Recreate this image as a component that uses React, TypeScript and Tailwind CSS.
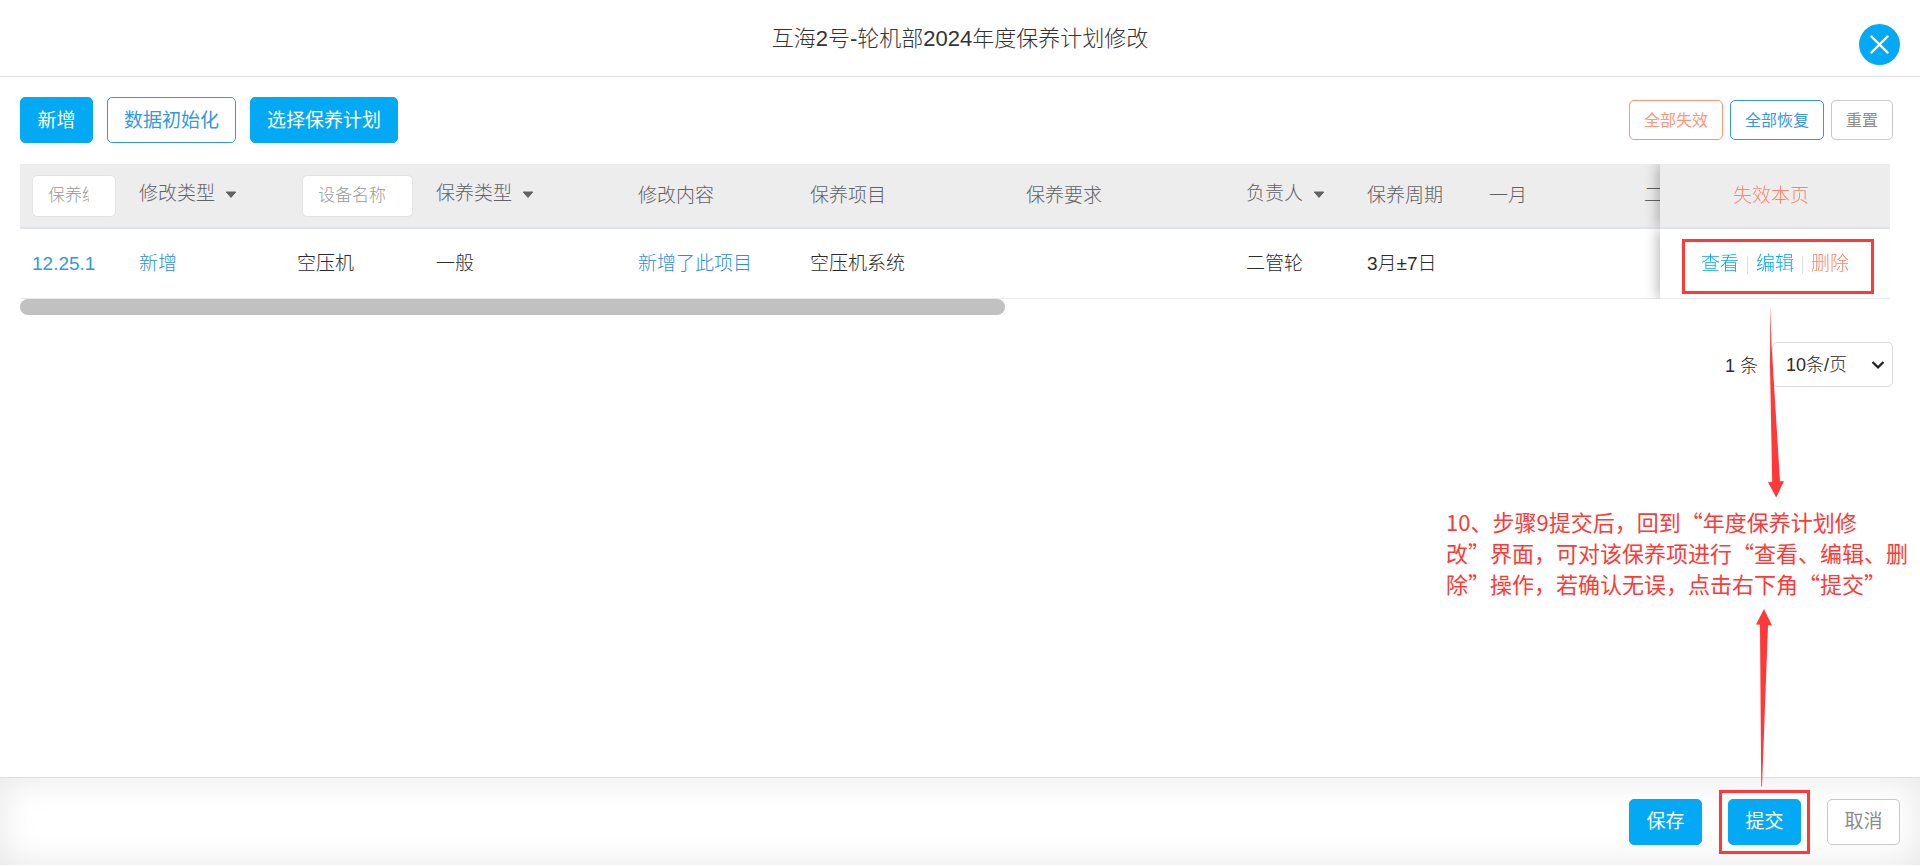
import type { ReactNode } from "react";

const solid =
  "h-[46px] min-w-[73px] rounded-[5px] border border-[#03a9f4] bg-[#03a9f4] px-4 pt-[2px] text-[19px] font-normal text-white";
const outlineBlue =
  "h-[46px] rounded-[5px] border border-[#3498e0] bg-white px-4 pt-[2px] text-[19px] font-normal text-[#3498e0]";
const outlineGray =
  "h-[46px] min-w-[73px] rounded-[5px] border border-[#c8c9cc] bg-white px-4 pt-[2px] text-[19px] font-normal text-[#8c8c8c]";
const small = "h-10 rounded-[5px] border bg-white px-[14px] pt-[2px] text-base font-normal";
const pinned =
  "sticky right-0 shadow-[-3px_0_12px_rgba(0,0,0,0.25)] [clip-path:inset(0_0_0_-16px)]";

function Caret() {
  return (
    <svg width="12" height="8" viewBox="0 0 12 8" className="shrink-0" aria-hidden="true">
      <path
        d="M1.2 1h9.6L6 6.4z"
        fill="#606266"
        stroke="#606266"
        strokeWidth="1"
        strokeLinejoin="round"
      />
    </svg>
  );
}

function HeadCell({ children }: { children?: ReactNode }) {
  return (
    <th
      scope="col"
      className="h-[65px] border-b-2 border-[#dfe4ea] bg-[#ededed] px-3 pt-[2px] text-left font-light whitespace-nowrap text-[#606266]"
    >
      {children}
    </th>
  );
}

function FilterHead({ label }: { label: string }) {
  return (
    <HeadCell>
      <button type="button" className="flex items-center gap-[10px] pb-1">
        {label}
        <Caret />
      </button>
    </HeadCell>
  );
}

function FilterInput({ label, className }: { label: string; className: string }) {
  return (
    <input
      type="text"
      aria-label={label}
      placeholder={label}
      className={
        "mb-[2px] block h-[42px] rounded-[5px] border border-[#e4e4e4] bg-white pr-[26px] pl-[15px] text-[17px] placeholder:text-[#999999] " +
        className
      }
    />
  );
}

function Cell({ children }: { children?: ReactNode }) {
  return (
    <td className="h-[70px] border-b border-[#e6e8eb] px-3 pt-[2px] whitespace-nowrap">
      {children}
    </td>
  );
}

function Separator() {
  return <span className="h-[18px] w-px bg-[#dcdfe6]" />;
}

export default function App() {
  return (
    <div className="relative flex h-screen flex-col overflow-hidden bg-white pb-[2px] font-['Liberation_Sans','Noto_Sans_CJK_SC',sans-serif] text-[19px] font-light text-[#2b2b2b]">
      <header className="grid h-[77px] shrink-0 grid-cols-[1fr_auto_1fr] items-center border-b border-[#e2e2e2] px-5">
        <h1 className="col-start-2 text-[22px] font-light text-[#333333]">
          互海2号-轮机部2024年度保养计划修改
        </h1>
        <button
          type="button"
          aria-label="关闭"
          className="mt-3 flex size-[41px] items-center justify-center justify-self-end rounded-full bg-[#03a9f4]"
        >
          <svg width="19" height="19" viewBox="0 0 19 19" aria-hidden="true">
            <path
              d="M1.5 1.5l16 16M17.5 1.5l-16 16"
              stroke="#fff"
              strokeWidth="2.4"
              strokeLinecap="round"
            />
          </svg>
        </button>
      </header>

      <main className="flex-1">
        <div className="flex items-center justify-between pt-5 pr-[27px] pl-5">
          <div className="flex gap-[14px]">
            <button type="button" className={solid}>新增</button>
            <button type="button" className={outlineBlue}>数据初始化</button>
            <button type="button" className={solid}>选择保养计划</button>
          </div>
          <div className="flex gap-[7px]">
            <button type="button" className={small + " border-[#ff9478] text-[#ff9478]"}>
              全部失效
            </button>
            <button type="button" className={small + " border-[#3498e0] text-[#3498e0]"}>
              全部恢复
            </button>
            <button type="button" className={small + " border-[#c8c9cc] text-[#8c8c8c]"}>
              重置
            </button>
          </div>
        </div>

        <div className="mt-[21px] mr-[30px] ml-5">
          <div className="overflow-x-auto [scrollbar-width:none]">
            <table className="w-[1997px] min-w-full table-fixed border-separate border-spacing-0">
              <colgroup>
                <col className="w-[107px]" />
                <col className="w-[158px]" />
                <col className="w-[139px]" />
                <col className="w-[202px]" />
                <col className="w-[172px]" />
                <col className="w-[216px]" />
                <col className="w-[220px]" />
                <col className="w-[121px]" />
                <col className="w-[122px]" />
                <col className="w-[155px]" />
                <col className="w-[155px]" />
                <col className="w-[230px]" />
              </colgroup>
              <thead>
                <tr>
                  <HeadCell>
                    <FilterInput label="保养编号" className="w-[84px]" />
                  </HeadCell>
                  <FilterHead label="修改类型" />
                  <HeadCell>
                    <FilterInput label="设备名称" className="ml-[5px] w-[111px]" />
                  </HeadCell>
                  <FilterHead label="保养类型" />
                  <HeadCell>修改内容</HeadCell>
                  <HeadCell>保养项目</HeadCell>
                  <HeadCell>保养要求</HeadCell>
                  <FilterHead label="负责人" />
                  <HeadCell>保养周期</HeadCell>
                  <HeadCell>一月</HeadCell>
                  <HeadCell>二月</HeadCell>
                  <th
                    scope="col"
                    className={
                      pinned +
                      " border-b-2 border-[#dfe4ea] bg-[#ededed] pt-[2px] pr-2 text-center font-light"
                    }
                  >
                    <button type="button" className="text-[#ff8466]">失效本页</button>
                  </th>
                </tr>
              </thead>
              <tbody>
                <tr>
                  <Cell>
                    <a href="#item" className="text-[#3498e0]">12.25.1</a>
                  </Cell>
                  <Cell>
                    <span className="text-[#2a8fdc]">新增</span>
                  </Cell>
                  <Cell>空压机</Cell>
                  <Cell>一般</Cell>
                  <Cell>
                    <span className="text-[#2a8fdc]">新增了此项目</span>
                  </Cell>
                  <Cell>空压机系统</Cell>
                  <Cell />
                  <Cell>二管轮</Cell>
                  <Cell>3月±7日</Cell>
                  <Cell />
                  <Cell />
                  <td className={pinned + " border-b border-[#e6e8eb] bg-white pt-[2px]"}>
                    <div className="flex items-center justify-center gap-2">
                      <a href="#view" className="text-[#03a9f4]">查看</a>
                      <Separator />
                      <a href="#edit" className="text-[#03a9f4]">编辑</a>
                      <Separator />
                      <a href="#delete" className="text-[#ff8466]">删除</a>
                    </div>
                  </td>
                </tr>
              </tbody>
            </table>
          </div>
          <div className="h-4">
            <div className="h-4 w-[985px] rounded-full bg-[#c1c1c1]" />
          </div>
        </div>

        <div className="mt-[27px] mr-[27px] flex items-center justify-end gap-[14px] text-lg">
          <span className="pt-[2px]">1 条</span>
          <div className="relative">
            <select
              aria-label="每页条数"
              className="h-[45px] w-[121px] appearance-none rounded-[5px] border border-[#dcdcdc] bg-white pl-[13px]"
            >
              <option>10条/页</option>
            </select>
            <svg
              width="14"
              height="10"
              viewBox="0 0 14 10"
              className="pointer-events-none absolute top-[18px] right-2"
              aria-hidden="true"
            >
              <path d="M1.5 2L7 7.4 12.5 2" fill="none" stroke="#222" strokeWidth="2.2" />
            </svg>
          </div>
        </div>
      </main>

      <footer className="flex h-[88px] shrink-0 items-center justify-end gap-[26px] border-t border-[#dddddd] px-5 shadow-[inset_0_0_36px_rgba(0,0,0,0.1)]">
        <button type="button" className={solid}>保存</button>
        <div className="relative">
          <button type="button" className={solid}>提交</button>
          <div className="pointer-events-none absolute -inset-[9px] border-3 border-[#ff3838]" />
        </div>
        <button type="button" className={outlineGray}>取消</button>
      </footer>

      <div className="pointer-events-none absolute top-[239px] right-[46px] h-[55px] w-48 border-3 border-[#ff3838]" />
      <svg
        width="18"
        height="192"
        viewBox="0 0 18 192"
        className="pointer-events-none absolute top-[306px] right-[135px]"
        aria-hidden="true"
      >
        <path d="M3.4 0L4.6 40 13 175.3 17 175 9.2 191.5 1 176.3 5.2 176 3 60z" fill="#ff3838" />
      </svg>
      <p className="pointer-events-none absolute top-[506px] right-2 w-[466px] font-['Noto_Sans_CJK_SC',sans-serif] text-[22px] leading-[31px] font-normal text-[#ff3838]">
        10、步骤9提交后，回到“年度保养计划修改”界面，可对该保养项进行“查看、编辑、删除”操作，若确认无误，点击右下角“提交”
      </p>
      <svg
        width="18"
        height="178"
        viewBox="0 0 18 178"
        className="pointer-events-none absolute right-[147px] bottom-[80px]"
        aria-hidden="true"
      >
        <path d="M9 0L17 16.5 13 16.3 7 177.5 6.2 177.5 5 15.8 1 15.6z" fill="#ff3838" />
      </svg>
    </div>
  );
}
